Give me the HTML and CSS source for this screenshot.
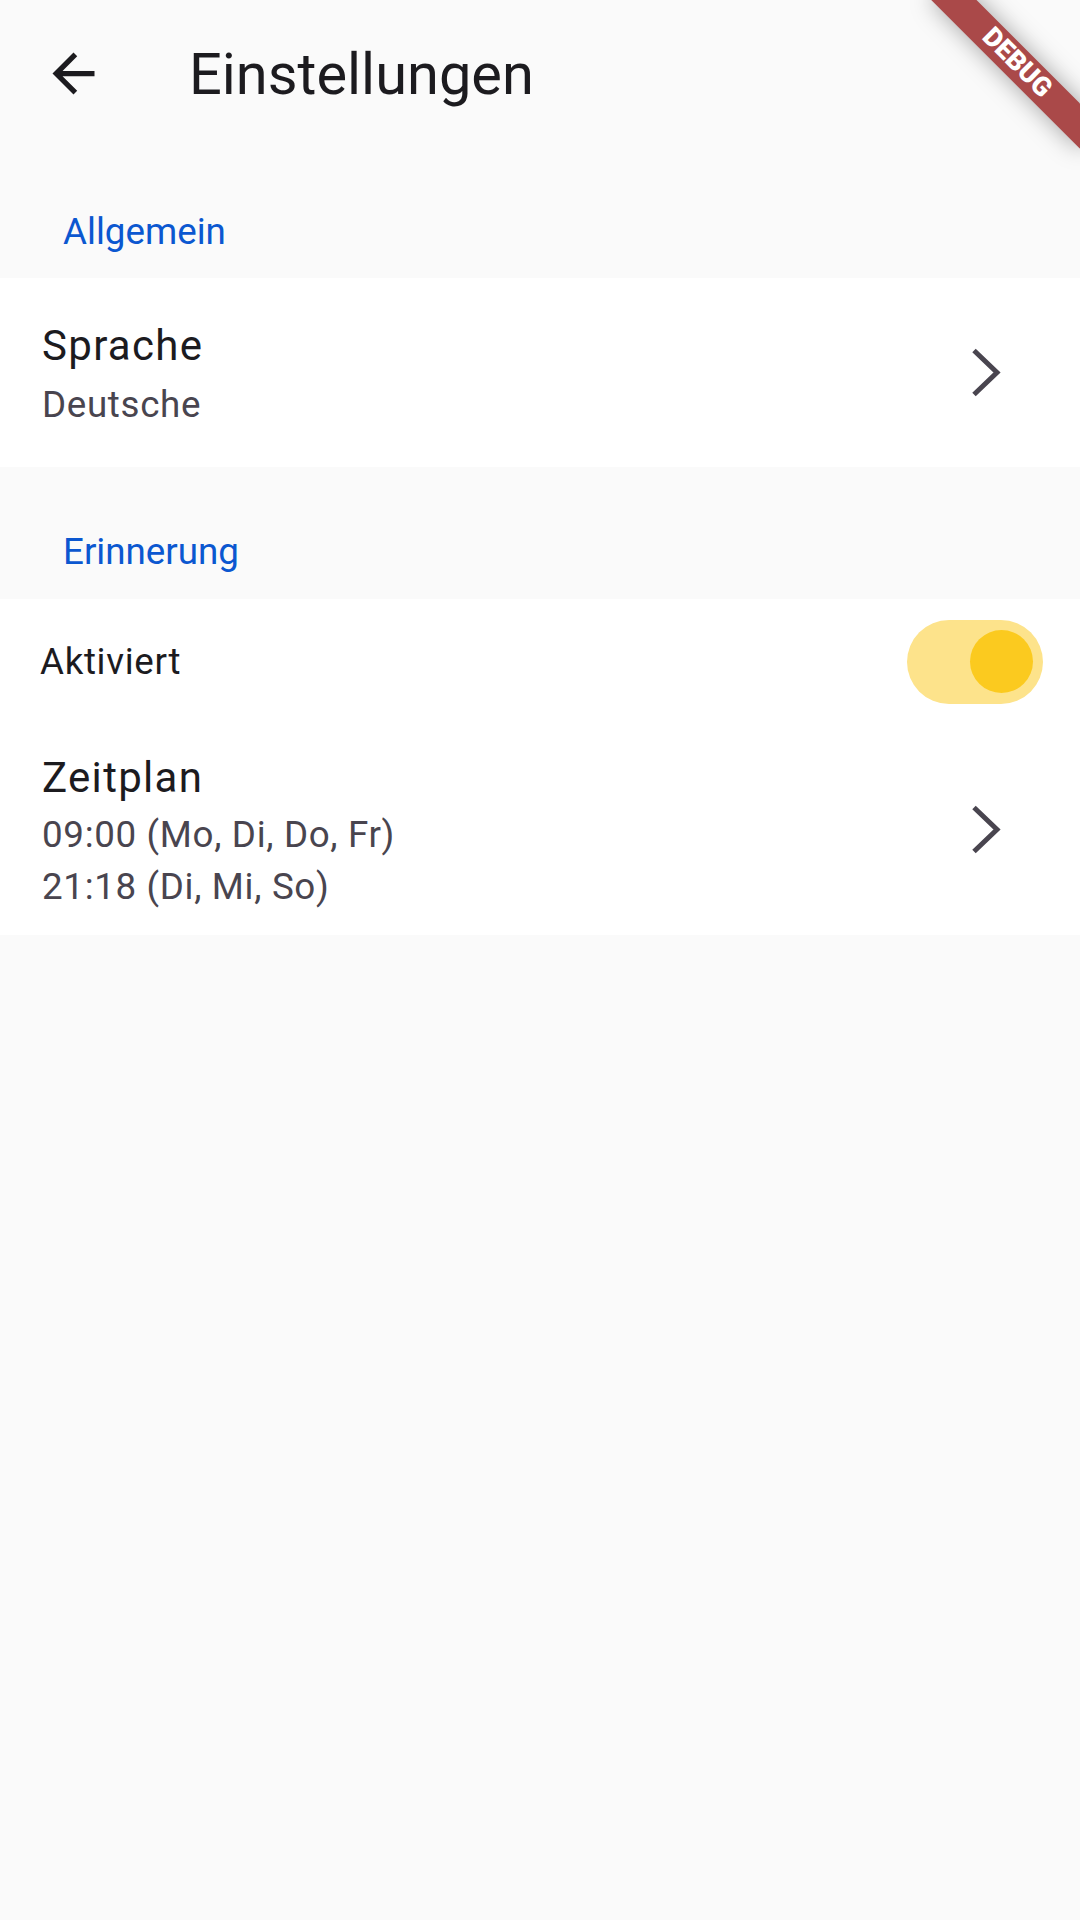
FILE: index.html
```html
<!DOCTYPE html>
<html lang="de">
<head>
<meta charset="utf-8">
<title>Einstellungen</title>
<link rel="stylesheet" href="styles.css">
</head>
<body>
<div class="screen">
  <header class="appbar">
    <div class="leading">
      <svg class="icon-back" viewBox="0 0 24 24"><path d="M20 11H7.83l5.59-5.59L12 4l-8 8 8 8 1.41-1.41L7.83 13H20v-2z"/></svg>
    </div>
    <h1 class="title">Einstellungen</h1>
  </header>
  <main>
    <section>
      <h2 class="section-title">Allgemein</h2>
      <div class="tile tile-two">
        <div class="tile-text">
          <div class="tile-title">Sprache</div>
          <div class="tile-sub">Deutsche</div>
        </div>
        <svg class="chevron" viewBox="0 0 24 24"><polyline points="7.62,3.62 16.38,12 7.62,20.38"/></svg>
      </div>
    </section>
    <section>
      <h2 class="section-title">Erinnerung</h2>
      <div class="switch-row">
        <span class="switch-label">Aktiviert</span>
        <div class="switch"><div class="switch-thumb"></div></div>
      </div>
      <div class="tile tile-three">
        <div class="tile-text">
          <div class="tile-title">Zeitplan</div>
          <div class="tile-sub">09:00 (Mo, Di, Do, Fr)</div>
          <div class="tile-sub">21:18 (Di, Mi, So)</div>
        </div>
        <svg class="chevron" viewBox="0 0 24 24"><polyline points="7.62,3.62 16.38,12 7.62,20.38"/></svg>
      </div>
    </section>
  </main>
  <div class="debug-banner"><span>DEBUG</span></div>
</div>
</body>
</html>
```

FILE: styles.css
```css
html, body {
  margin: 0;
  padding: 0;
  background: #fafafa;
}

body {
  font-family: Roboto, "Noto Sans", "Liberation Sans", sans-serif;
}

.screen {
  position: relative;
  width: 1080px;
  height: 1920px;
  overflow: hidden;
  background: #fafafa;
}

.appbar {
  display: flex;
  align-items: center;
  height: 147px;
}

.leading {
  display: flex;
  align-items: center;
  justify-content: center;
  width: 147px;
  height: 147px;
  flex: none;
}

.icon-back {
  width: 63px;
  height: 63px;
  fill: #1c1b1f;
}

.title {
  margin: 0 0 0 42px;
  font-size: 57.75px;
  font-weight: 400;
  line-height: normal;
  color: #1c1b1f;
}

.section-title {
  margin: 0;
  padding: 63px 0 25.25px 63px;
  font-size: 36.75px;
  font-weight: 400;
  line-height: 43px;
  color: #0b57d0;
}

.tile {
  display: flex;
  align-items: center;
  box-sizing: border-box;
  min-height: 189px;
  padding: 0 63px 0 42px;
  background: #ffffff;
}

.tile-two .tile-title {
  margin-bottom: 2px;
}

.tile-three {
  min-height: 0;
  padding: 21px 63px 21px 42px;
}

.tile-text {
  flex: 1;
}

.tile-title {
  font-size: 42px;
  line-height: 63px;
  letter-spacing: 1.31px;
  color: #1c1b1f;
}

.tile-sub {
  font-size: 36.75px;
  line-height: 52.5px;
  letter-spacing: 0.66px;
  color: #49454f;
}

.chevron {
  flex: none;
  width: 63px;
  height: 63px;
  fill: none;
  stroke: #49454f;
  stroke-width: 1.9;
  stroke-linejoin: miter;
  stroke-linecap: butt;
}

.switch-row {
  display: flex;
  align-items: center;
  justify-content: space-between;
  box-sizing: border-box;
  height: 126px;
  padding: 0 37px 0 40px;
  background: #ffffff;
}

.switch-label {
  font-size: 36.75px;
  letter-spacing: 0.66px;
  color: #1c1b1f;
}

.switch {
  display: flex;
  align-items: center;
  justify-content: flex-end;
  box-sizing: border-box;
  width: 136.5px;
  height: 84px;
  padding: 0 10.5px;
  border-radius: 42px;
  background: #fde38b;
}

.switch-thumb {
  width: 63px;
  height: 63px;
  border-radius: 50%;
  background: #fbca1f;
}

.debug-banner {
  position: absolute;
  left: 912px;
  top: 47.35px;
  width: 210px;
  height: 31.5px;
  display: flex;
  align-items: center;
  justify-content: center;
  transform: rotate(45deg);
  background: #aa4949;
  box-shadow: 0 0 24px rgba(0, 0, 0, 0.35);
  color: #ffffff;
  font-family: Roboto, "Noto Sans", sans-serif;
  font-size: 26.78px;
  font-weight: 900;
  line-height: 1;
}
```
